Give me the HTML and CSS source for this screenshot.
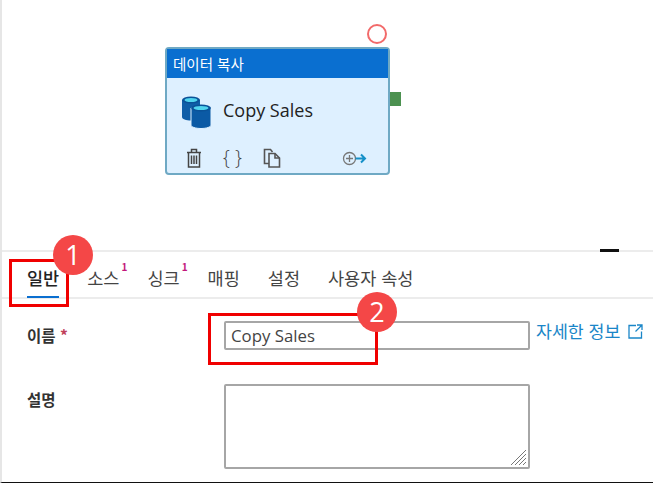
FILE: index.html
```html
<!DOCTYPE html>
<html lang="ko">
<head>
    <meta charset="UTF-8">
    <meta name="viewport" content="width=device-width, initial-scale=1.0">
    <title>데이터 복사</title>
    <link rel="stylesheet" href="styles.css">
</head>
<body>
    <div id="page">
        <div id="canvas">
            <div class="handle-circle"></div>
            <div class="activity">
                <div class="activity-head">데이터 복사</div>
                <div class="activity-body">
                    <svg class="db-icon" width="30" height="33" viewBox="0 0 30 33">
                        <path d="M0 4v17c0 2 4 3.500 9 3.500s9-1.500 9-3.500V4z" fill="#0f5ea8"/>
                        <ellipse cx="9" cy="4" rx="9" ry="3.500" fill="#0a5298"/>
                        <ellipse cx="9" cy="4" rx="6.500" ry="2" fill="#50d4ee"/>
                        <path d="M9 12v17c0 2 4.500 3.500 10 3.500S29 31 29 29V12z" fill="#0b5aa5" stroke="#def0ff" stroke-width="1"/>
                        <ellipse cx="19" cy="12" rx="10" ry="3.500" fill="#0a5298"/>
                        <ellipse cx="19" cy="12" rx="7.500" ry="2" fill="#50d4ee"/>
                    </svg>
                    <span class="activity-name">Copy Sales</span>
                </div>
                <div class="activity-tools">
                    <svg width="16" height="20" viewBox="0 0 16 20" fill="none" stroke="#444" stroke-width="1.500">
                        <path d="M1 4.500h14M5.500 4.500V1.500h5v3M2.500 4.500v14.500h11V4.500"/>
                        <path d="M5.500 7.500v8.500M8 7.500v8.500M10.500 7.500v8.500"/>
                    </svg>
                    <span class="braces">{ }</span>
                    <svg width="18" height="20" viewBox="0 0 18 20" fill="none" stroke="#555" stroke-width="1.600">
                        <path d="M6 15.500H1.500V1.500h6l2 2.500"/>
                        <path d="M6 5.500h6l4.500 4.500v9H6z"/>
                        <path d="M12 5.500V10h4.500"/>
                    </svg>
                    <svg class="add-next" width="25" height="15" viewBox="0 0 25 15" fill="none">
                        <circle cx="7.500" cy="7.500" r="6" stroke="#777" stroke-width="1.300"/>
                        <path d="M7.500 4v7M4 7.500h7" stroke="#777" stroke-width="1.300"/>
                        <path d="M13.500 7.500h9M19 3.500l4 4-4 4" stroke="#1590c8" stroke-width="2"/>
                    </svg>
                </div>
                <div class="out-port"></div>
            </div>
        </div>

        <div id="panel">
            <div class="tabs">
                <div class="tab tab-active">일반</div>
                <div class="tab">소스<sup>1</sup></div>
                <div class="tab">싱크<sup>1</sup></div>
                <div class="tab">매핑</div>
                <div class="tab">설정</div>
                <div class="tab">사용자 속성</div>
            </div>
            <div class="form-row">
                <label class="form-label">이름 <span class="req">*</span></label>
                <input class="name-input" type="text" value="Copy Sales">
                <a class="more-link">자세한 정보
                    <svg width="15" height="15" viewBox="0 0 15 15" fill="none" stroke="#1a86c8" stroke-width="1.300">
                        <path d="M8 1.500H1v12.500h12.500V7.500"/>
                        <path d="M9 1h5v5M14 1L7.500 7.500"/>
                    </svg>
                </a>
            </div>
            <div class="form-row desc-row">
                <label class="form-label">설명</label>
                <div class="desc-box">
                    <svg class="grip" width="17" height="17" viewBox="0 0 17 17" stroke="#777" stroke-width="1">
                        <path d="M1 16L16 1M5 16L16 5M9 16l7-7M13 16l3-3"/>
                    </svg>
                </div>
            </div>
        </div>

        <div class="mark mark-one"></div>
        <div class="mark mark-two"></div>
        <div class="badge badge-one">1</div>
        <div class="badge badge-two">2</div>
        <div class="dash"></div>
    </div>
</body>
</html>
```
FILE: styles.css
```css
* {
    box-sizing: border-box;
}

body {
    margin: 0;
    overflow: hidden;
    background: #fff;
    font-family: "Noto Sans CJK KR", "Open Sans", sans-serif;
    color: #333;
}

#page {
    position: relative;
    width: 653px;
    height: 483px;
    border-left: 2px solid #e6e6e6;
    border-bottom: 1px solid #111;
    overflow: hidden;
}

#canvas {
    position: relative;
    height: 252px;
    padding: 47px 0 0 163px;
    border-bottom: 2px solid #ececec;
}

.handle-circle {
    position: absolute;
    left: 365px;
    top: 24px;
    width: 20px;
    height: 20px;
    border: 2px solid #f26a6a;
    border-radius: 50%;
}

/* activity box */
.activity {
    position: relative;
    width: 225px;
    height: 128px;
    border: 2px solid #6fa9c4;
    border-radius: 4px;
    background: #def0ff;
}

.activity-head {
    height: 29px;
    background: #0a6fd0;
    color: #fff;
    font-size: 14.500px;
    line-height: 29px;
    padding-left: 6px;
}

.activity-body {
    display: flex;
    align-items: center;
    height: 65px;
    padding-left: 15px;
}

.db-icon {
    margin-top: 3px;
}

.activity-name {
    margin: 0 0 2px 11px;
    font-family: "Open Sans", sans-serif;
    font-size: 18px;
    color: #222;
}

.activity-tools {
    display: flex;
    align-items: center;
    gap: 21px;
    padding: 5px 0 0 19px;
}

.braces {
    font-family: "Open Sans", sans-serif;
    font-size: 19.500px;
    font-weight: 300;
    line-height: 20px;
    color: #444;
    white-space: pre;
}

.add-next {
    margin-left: 40px;
}

.out-port {
    position: absolute;
    left: 223px;
    top: 43px;
    width: 11px;
    height: 14px;
    background: #4c9150;
}

/* tabs */
.tabs {
    display: flex;
    gap: 28px;
    height: 47px;
    padding-left: 25px;
    border-bottom: 2px solid #ececec;
}

.tab {
    position: relative;
    height: 45px;
    padding-top: 15px;
    font-size: 17.500px;
    line-height: 22px;
    color: #444;
    white-space: nowrap;
}

.tab sup {
    position: absolute;
    top: 9px;
    right: -8px;
    font-size: 10px;
    font-weight: 700;
    line-height: 12px;
    color: #c2177b;
}

.tab-active {
    font-weight: 500;
    color: #222;
}

.tab-active::after {
    content: "";
    position: absolute;
    left: 0;
    right: 0;
    bottom: -1px;
    height: 2px;
    background: #0a6fd0;
}

/* form */
.form-row {
    display: flex;
    align-items: center;
    padding: 21px 0 0 25px;
}

.form-label {
    width: 197px;
    font-size: 15.500px;
    line-height: 22px;
    font-weight: 700;
    color: #333;
}

.req {
    color: #c0405a;
}

.name-input {
    width: 306px;
    height: 29px;
    padding: 0 5px;
    border: 2px solid #a6a6a6;
    border-radius: 2px;
    font-family: "Open Sans", sans-serif;
    font-size: 16.800px;
    color: #444;
    outline: none;
}

.more-link {
    display: flex;
    align-items: center;
    gap: 8px;
    margin: 0 0 8px 6px;
    font-size: 17.300px;
    line-height: 22px;
    color: #1a86c8;
    white-space: nowrap;
}

.desc-row {
    align-items: flex-start;
    padding-top: 34px;
}

.desc-row .form-label {
    margin-top: 4px;
}

.desc-box {
    position: relative;
    width: 306px;
    height: 85px;
    border: 2px solid #a6a6a6;
    border-radius: 2px;
}

.grip {
    position: absolute;
    right: 1px;
    bottom: 1px;
}

/* callouts laid over the screenshot */
.mark {
    position: absolute;
    border: 3px solid #f00000;
}

.mark-one {
    left: 7px;
    top: 259px;
    width: 60px;
    height: 48px;
}

.mark-two {
    left: 206px;
    top: 313px;
    width: 170px;
    height: 52px;
}

.badge {
    position: absolute;
    width: 40px;
    height: 40px;
    border-radius: 50%;
    background: #f44747;
    color: #fff;
    font-family: "Open Sans", sans-serif;
    font-size: 27px;
    line-height: 40px;
    text-align: center;
}

.badge-one {
    left: 51px;
    top: 235px;
}

.badge-two {
    left: 355px;
    top: 292px;
}

.dash {
    position: absolute;
    left: 598px;
    top: 249px;
    width: 19px;
    height: 3px;
    background: #111;
}
```
